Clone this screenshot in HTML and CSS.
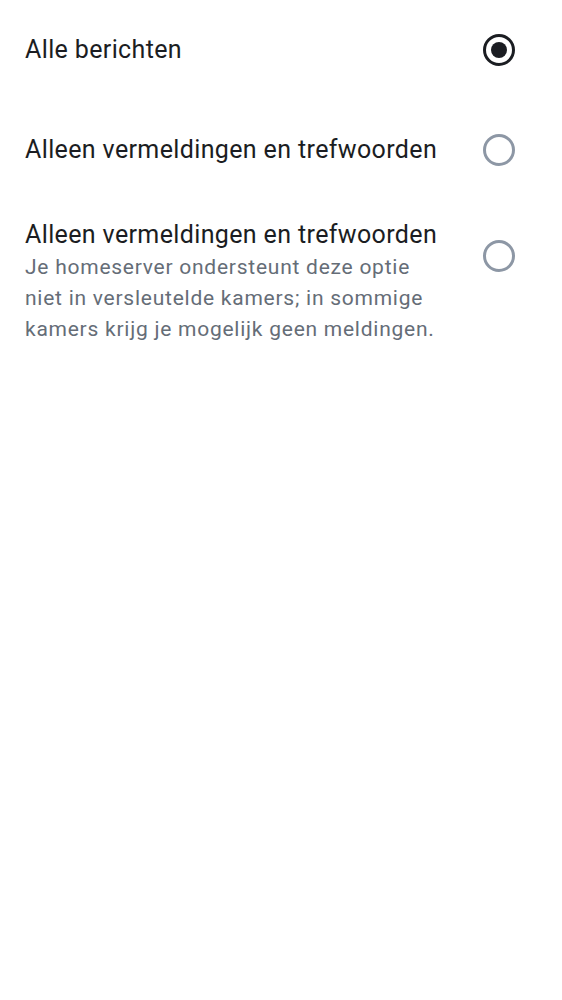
FILE: index.html
```html
<!DOCTYPE html>
<html lang="nl">
<head>
<meta charset="utf-8">
<link rel="stylesheet" href="styles.css">
</head>
<body>
<div class="list">
  <div class="row simple">
    <div class="text"><div class="title">Alle berichten</div></div>
    <span class="radio checked"></span>
  </div>
  <div class="row simple">
    <div class="text"><div class="title">Alleen vermeldingen en trefwoorden</div></div>
    <span class="radio"></span>
  </div>
  <div class="row multi">
    <div class="text">
      <div class="title">Alleen vermeldingen en trefwoorden</div>
      <div class="sub">Je homeserver ondersteunt deze optie niet in versleutelde kamers; in sommige kamers krijg je mogelijk geen meldingen.</div>
    </div>
    <span class="radio"></span>
  </div>
</div>
</body>
</html>
```
FILE: styles.css
```css
html, body {
  margin: 0;
  padding: 0;
  background: #ffffff;
}
body {
  font-family: Roboto, "Noto Sans", sans-serif;
  color: #1b1d22;
}
.list {
  display: flex;
  flex-direction: column;
}
.row {
  display: flex;
  padding: 0 47px 0 25px;
  gap: 16px;
}
.row.simple {
  height: 100px;
  align-items: center;
}
.row.multi {
  padding-top: 19px;
  align-items: flex-start;
}
.text {
  flex: 1;
  min-width: 0;
}
.title {
  font-size: 25px;
  line-height: 32px;
  letter-spacing: 0.37px;
  white-space: nowrap;
}
.sub {
  font-size: 21px;
  line-height: 31px;
  color: #656d77;
  margin-top: 1px;
  max-width: 415px;
  letter-spacing: 0.75px;
}
.radio {
  width: 26px;
  height: 26px;
  border: 3px solid #8d97a5;
  border-radius: 50%;
  flex: none;
  display: flex;
  align-items: center;
  justify-content: center;
}
.multi .radio {
  margin-top: 21px;
}
.radio.checked {
  border-color: #1b1d22;
}
.radio.checked::after {
  content: "";
  width: 16px;
  height: 16px;
  border-radius: 50%;
  background: #1b1d22;
}
```
